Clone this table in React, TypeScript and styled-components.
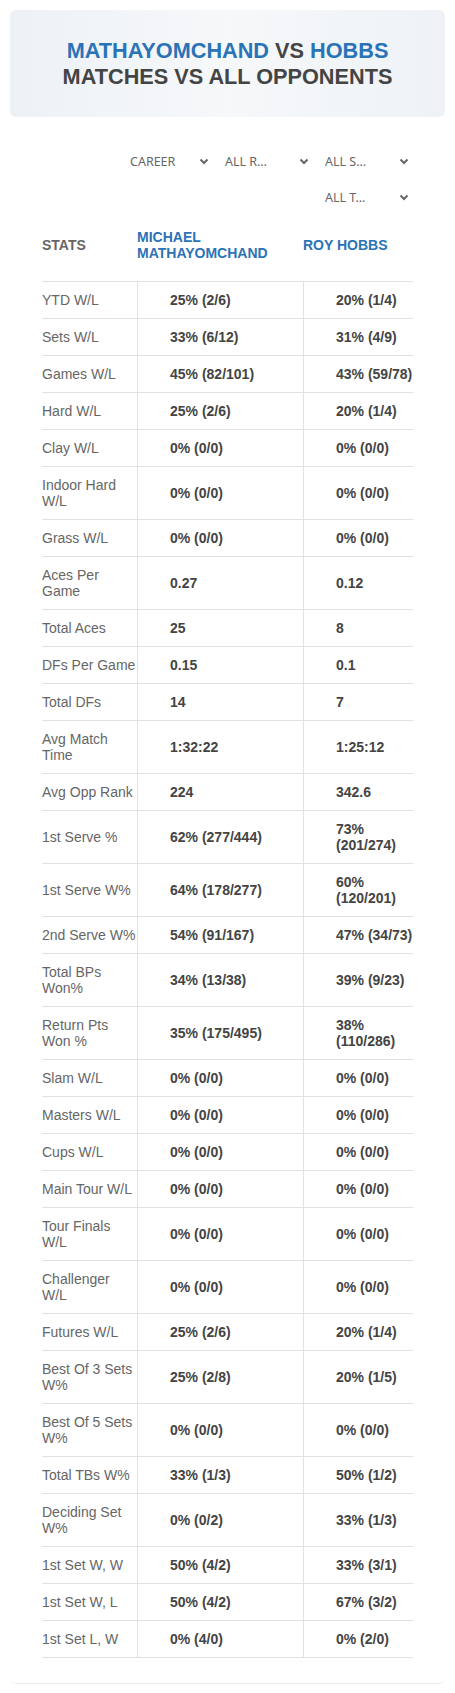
import styled, { createGlobalStyle } from "styled-components";

const GlobalStyle = createGlobalStyle`
  body {
    margin: 0;
    background: #fff;
    font-family: "Liberation Sans", Arial, sans-serif;
  }
`;

const Page = styled.div`
  padding: 10px 10px 9px;
`;
const Card = styled.div`
  width: 435px;
  padding-bottom: 25px;
  border-bottom: 1px solid #eceef0;
  border-radius: 0 0 6px 6px;
`;
const Hero = styled.div`
  height: 107px;
  display: flex;
  align-items: center;
  justify-content: center;
  border-radius: 6px;
  background: linear-gradient(90deg, #edf1f6 0%, #f6f8fa 50%, #eef2f6 100%);
`;
const Title = styled.h1`
  margin: 0;
  font-size: 21.7px;
  line-height: 26px;
  font-weight: 700;
  color: #444;
  text-align: center;
  text-transform: uppercase;
`;
const Name = styled.span`
  color: #2a73b6;
`;

const Filters = styled.div`
  display: flex;
  flex-wrap: wrap;
  justify-content: flex-end;
  margin: 26px 30px 0 100px;
`;
const Select = styled.div<{ $w: number }>`
  width: ${(p) => p.$w}px;
  height: 36px;
  box-sizing: border-box;
  padding: 0 6px 0 10px;
  display: flex;
  align-items: center;
  justify-content: space-between;
  font-family: "Noto Sans", sans-serif;
  font-size: 12.5px;
  color: #666;
  text-transform: uppercase;
`;

const Table = styled.div`
  margin: 0 32px;
`;
const Row = styled.div`
  display: grid;
  grid-template-columns: 95px 166px 110px;
  border-bottom: 1px solid #e1e1e1;
  font-size: 14px;
  line-height: 16px;
`;
const HeadRow = styled(Row)`
  padding: 14px 0 20px;
  align-items: center;
  font-weight: 700;
  text-transform: uppercase;
`;
const HeadCell = styled.div<{ $blue?: boolean }>`
  color: ${(p) => (p.$blue ? "#2a73b6" : "#666")};
`;
const Label = styled.div`
  padding: 10px 0;
  display: flex;
  align-items: center;
  color: #666;
`;
const Value = styled.div`
  padding: 10px 0 10px 32px;
  border-left: 1px solid #e1e1e1;
  display: flex;
  align-items: center;
  font-weight: 700;
  color: #444;
`;

const Chevron = () => (
  <svg width="10" height="7" viewBox="0 0 10 7">
    <polyline points="1.5,1.5 5,5 8.5,1.5" fill="none" stroke="#666" strokeWidth="2" />
  </svg>
);

const stats: [string, string, string][] = [
  ["YTD W/L", "25% (2/6)", "20% (1/4)"],
  ["Sets W/L", "33% (6/12)", "31% (4/9)"],
  ["Games W/L", "45% (82/101)", "43% (59/78)"],
  ["Hard W/L", "25% (2/6)", "20% (1/4)"],
  ["Clay W/L", "0% (0/0)", "0% (0/0)"],
  ["Indoor Hard W/L", "0% (0/0)", "0% (0/0)"],
  ["Grass W/L", "0% (0/0)", "0% (0/0)"],
  ["Aces Per Game", "0.27", "0.12"],
  ["Total Aces", "25", "8"],
  ["DFs Per Game", "0.15", "0.1"],
  ["Total DFs", "14", "7"],
  ["Avg Match Time", "1:32:22", "1:25:12"],
  ["Avg Opp Rank", "224", "342.6"],
  ["1st Serve %", "62% (277/444)", "73% (201/274)"],
  ["1st Serve W%", "64% (178/277)", "60% (120/201)"],
  ["2nd Serve W%", "54% (91/167)", "47% (34/73)"],
  ["Total BPs Won%", "34% (13/38)", "39% (9/23)"],
  ["Return Pts Won %", "35% (175/495)", "38% (110/286)"],
  ["Slam W/L", "0% (0/0)", "0% (0/0)"],
  ["Masters W/L", "0% (0/0)", "0% (0/0)"],
  ["Cups W/L", "0% (0/0)", "0% (0/0)"],
  ["Main Tour W/L", "0% (0/0)", "0% (0/0)"],
  ["Tour Finals W/L", "0% (0/0)", "0% (0/0)"],
  ["Challenger W/L", "0% (0/0)", "0% (0/0)"],
  ["Futures W/L", "25% (2/6)", "20% (1/4)"],
  ["Best Of 3 Sets W%", "25% (2/8)", "20% (1/5)"],
  ["Best Of 5 Sets W%", "0% (0/0)", "0% (0/0)"],
  ["Total TBs W%", "33% (1/3)", "50% (1/2)"],
  ["Deciding Set W%", "0% (0/2)", "33% (1/3)"],
  ["1st Set W, W", "50% (4/2)", "33% (3/1)"],
  ["1st Set W, L", "50% (4/2)", "67% (3/2)"],
  ["1st Set L, W", "0% (4/0)", "0% (2/0)"],
];

const filters: [string, number][] = [
  ["Career", 95],
  ["All R…", 100],
  ["All S…", 100],
  ["All T…", 100],
];

export default function App() {
  return (
    <Page>
      <GlobalStyle />
      <Card>
        <Hero>
          <Title>
            <Name>Mathayomchand</Name> vs <Name>Hobbs</Name>
            <br />
            Matches vs All Opponents
          </Title>
        </Hero>
        <Filters>
          {filters.map(([f, w]) => (
            <Select key={f} $w={w}>
              <span>{f}</span>
              <Chevron />
            </Select>
          ))}
        </Filters>
        <Table>
          <HeadRow>
            <HeadCell>Stats</HeadCell>
            <HeadCell $blue>Michael Mathayomchand</HeadCell>
            <HeadCell $blue>Roy Hobbs</HeadCell>
          </HeadRow>
          {stats.map(([label, a, b]) => (
            <Row key={label}>
              <Label>{label}</Label>
              <Value>{a}</Value>
              <Value>{b}</Value>
            </Row>
          ))}
        </Table>
      </Card>
    </Page>
  );
}
